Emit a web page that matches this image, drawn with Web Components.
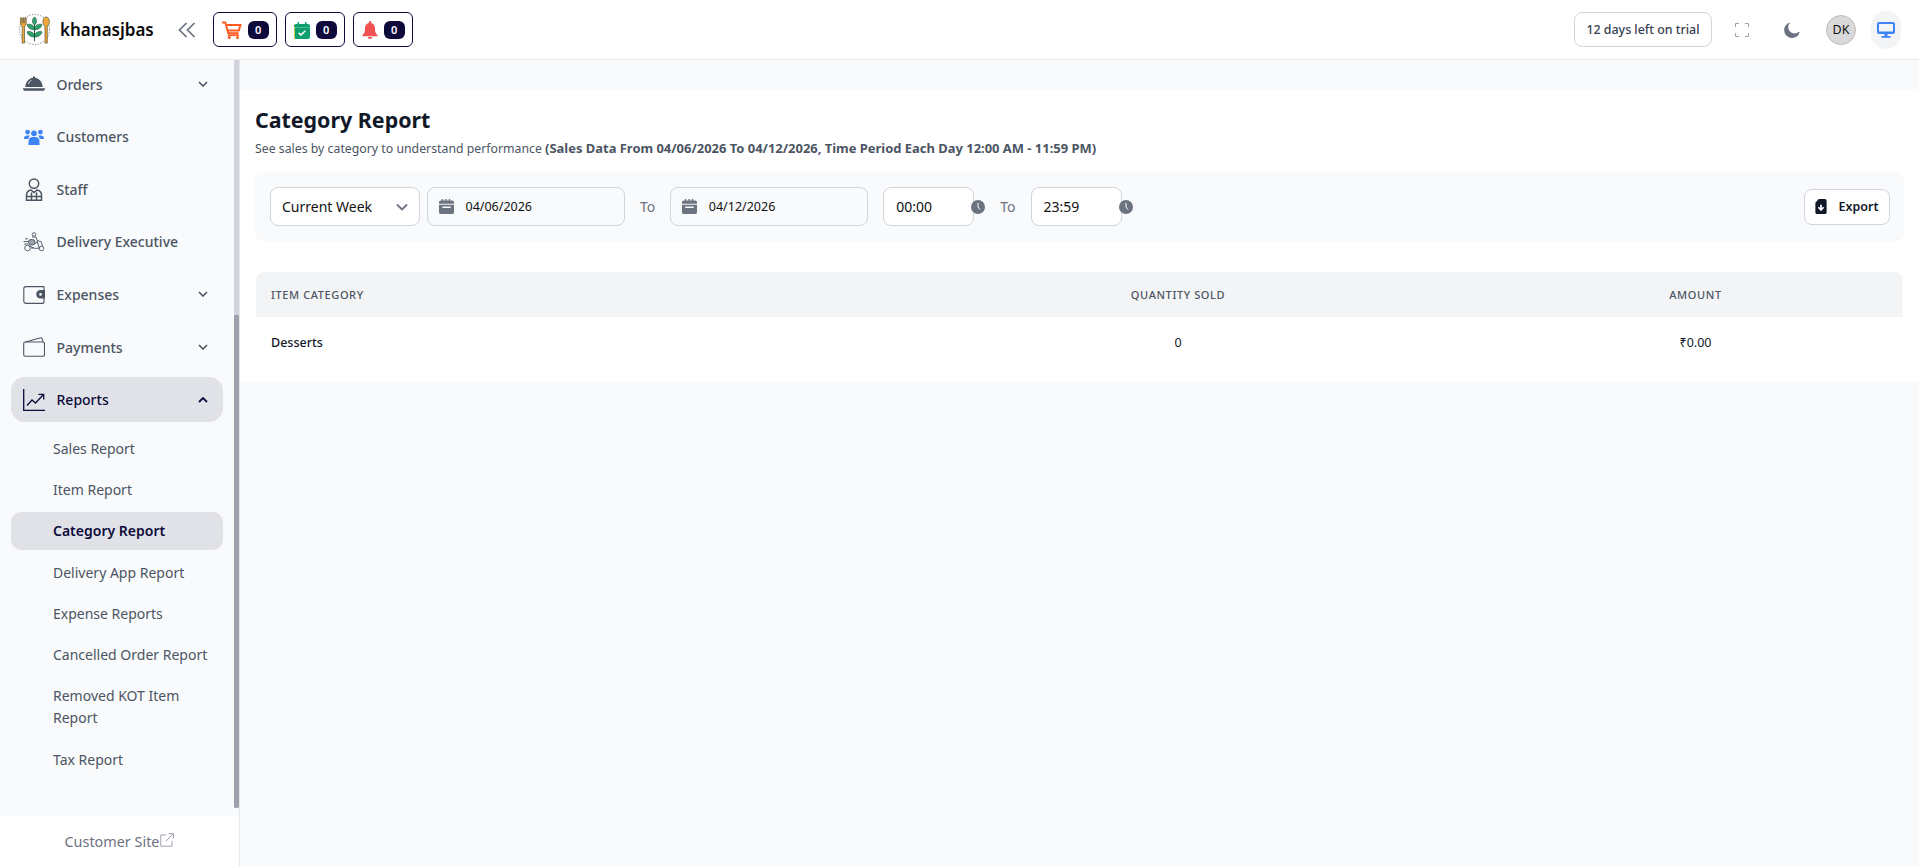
<!doctype html>
<html><head><meta charset="utf-8">
<style>
html,body{margin:0;height:100%;overflow:hidden}
body{font-family:"Noto Sans",sans-serif;background:#f9fafb;color:#111827}
app-shell{height:100vh}
</style></head>
<body>
<app-shell>
  <top-bar slot="top"></top-bar>
  <side-bar slot="side"></side-bar>
  <report-page></report-page>
</app-shell>
<script>
const I={
 logo:`<svg viewBox="0 0 34 34" width="33" height="33"><circle cx="17" cy="17" r="15.5" fill="none" stroke="#555" stroke-width=".7" stroke-dasharray="1.4 1.4"/><path d="M2.500 5v6c0 1.500 1 2.200 1.800 2.600V31h2.400V13.600c.8-.4 1.800-1.100 1.800-2.600V5H7v5H6V5H5v5H4V5z" fill="#f2a93b" stroke="#3a3a20" stroke-width=".6"/><path d="M29 4c-2 0-3.300 2.400-3.300 5.200 0 2.200.9 3.700 2.100 4.300V31h2.400V13.500c1.200-.6 2.100-2.100 2.100-4.300C32.300 6.400 31 4 29 4z" fill="#f2a93b" stroke="#3a3a20" stroke-width=".6"/><path d="M17 4c2.600 2.200 3 5.600 0 8.500-3-2.900-2.600-6.300 0-8.500zM17 15c1.700-3.200 5-3.900 7.600-3.200-.3 3.400-3.800 5.500-7.600 5.500-3.800 0-7.300-2.100-7.600-5.500 2.600-.7 5.900 0 7.600 3.200zM17 22.500c1.700-3.200 5-3.900 7.600-3.200-.3 3.400-3.800 5.500-7.600 5.500-3.800 0-7.300-2.100-7.600-5.500 2.600-.7 5.900 0 7.600 3.200z" fill="#2fa36b" stroke="#1e4d38" stroke-width=".6"/><path d="M17 12v17" stroke="#1e4d38" stroke-width="1"/></svg>`,
 dbl:`<svg viewBox="0 0 18 16" width="18" height="16" fill="none" stroke="#6b7280" stroke-width="1.700"><path d="M8.500 1 1.500 8l7 7M16.500 1 9.500 8l7 7"/></svg>`,
 cart:`<svg viewBox="0 0 20 18" width="20" height="18" fill="none" stroke="#ff5a1f"><path stroke-width="1.900" d="M0 1.500h3.400l2.800 10.700h10.400"/><path stroke-width="1.900" d="M4.300 4h14.200l-1.700 5.500H5.700"/><path stroke-width="1.700" d="M5.800 14.200h11"/><circle cx="7.300" cy="16.400" r="1.500" fill="#ff5a1f" stroke="none"/><circle cx="15.500" cy="16.400" r="1.500" fill="#ff5a1f" stroke="none"/></svg>`,
 cal:`<svg viewBox="0 0 16 18" width="16" height="18"><path d="M0 5a2 2 0 0 1 2-2h12a2 2 0 0 1 2 2v1.500H0z" fill="#0e9f6e"/><path d="M0 6.500h16V16a2 2 0 0 1-2 2H2a2 2 0 0 1-2-2z" fill="#0e9f6e"/><path d="M3.500 1h1.500v3.500H3.500zM11 1h1.500v3.500H11z" fill="#0e9f6e"/><path d="M4.700 11.800 7 14l4.300-4.200" stroke="#fff" stroke-width="1.600" fill="none"/><path d="M0 6h.8v12H0z" fill="#fcd34d"/></svg>`,
 bell:`<svg viewBox="0 0 16 18" width="16" height="18" fill="#f05252"><path d="M8 0c.7 0 1.100.5 1.100 1.100v.9C11.700 2.500 13 4.700 13 7.200c0 3.600.5 4.700 2.600 7.100.3.400 0 .9-.5.9H.9c-.5 0-.8-.5-.5-.9C2.500 11.900 3 10.800 3 7.200 3 4.700 4.300 2.500 6.900 2v-.9C6.900.500 7.300 0 8 0zM5.700 16h4.600C10 17.200 9.100 18 8 18s-2-.8-2.300-2z"/></svg>`,
 full:`<svg viewBox="0 0 14 14" width="14" height="14" fill="none" stroke="#9ca3af" stroke-width="1"><path d="M.5 4V.5H4M10 .5h3.500V4M13.500 10v3.500H10M4 13.500H.5V10"/></svg>`,
 moon:`<svg viewBox="0 0 16 16" width="16" height="16" fill="#6b7280"><path d="M6.300.4A7.900 7.900 0 0 0 8 16a7.900 7.900 0 0 0 7.600-5.700c.1-.4-.2-.7-.5-.5A6.300 6.300 0 0 1 6.300.4z"/></svg>`,
 mon:`<svg viewBox="0 0 18 16" width="18" height="16" fill="#3f83f8"><path fill-rule="evenodd" d="M2 0h14a2 2 0 0 1 2 2v8a2 2 0 0 1-2 2H2a2 2 0 0 1-2-2V2a2 2 0 0 1 2-2zm0 2v7.500h14V2z"/><path d="M7.500 12h3v2h-3zM4.500 14h9v1.800h-9z"/></svg>`,
 orders:`<svg viewBox="0 0 22 18" width="22" height="18" fill="#4b5563"><path d="M11 1.200a1.100 1.100 0 0 1 1 1.500c4.400.6 7.300 4.300 7.700 9.300H2.300C2.700 7 5.600 3.300 10 2.700a1.100 1.100 0 0 1 1-1.500z"/><path d="M0 13.200h22v.9l-1 1.700H1L0 14.100z"/><path d="M5.500 9c.4-1.700 1.400-3 3-3.700" stroke="#f9fafb" stroke-width=".9" fill="none"/></svg>`,
 cust:`<svg viewBox="0 0 20 16" width="20" height="16" fill="#3f83f8"><circle cx="3.600" cy="3.100" r="2.400"/><circle cx="16.400" cy="3.100" r="2.400"/><circle cx="10" cy="4.300" r="2.900"/><path d="M0 9.200c0-1.600 1.300-2.800 3-2.800h1.700c.5 0 1 .2 1.300.4-1 .9-1.600 2-1.600 3.300H0zM20 9.200c0-1.600-1.300-2.800-3-2.800h-1.700c-.5 0-1 .2-1.300.4 1 .9 1.600 2 1.600 3.300H20zM4.500 12.300c0-2.400 1.800-4.300 4-4.300h3c2.200 0 4 1.900 4 4.300V16h-11z"/></svg>`,
 staff:`<svg viewBox="0 0 18 23" width="18" height="23" fill="none" stroke="#4b5563" stroke-width="1.500"><circle cx="9" cy="5.600" r="4.700"/><path d="M1.500 22.200v-5.200c0-2.800 2.300-4.500 4.500-5l3 2.500 3-2.500c2.200.5 4.500 2.200 4.500 5v5.200zM6.500 14.500v7.700M11.500 14.500v7.700M1.500 18.500h15"/></svg>`,
 deliv:`<svg viewBox="0 0 22 20" width="22" height="20" fill="none" stroke="#4b5563" stroke-width=".9"><circle cx="11" cy="2.500" r="1.800"/><path d="M9 5h4l1.500 4.500-2 2H9.500"/><circle cx="4.500" cy="16" r="2.800"/><circle cx="18.500" cy="16.500" r="2.300"/><rect x="5.500" y="7.500" width="6.500" height="5.500" rx="2.500" fill="#9ca3af"/><path d="M.5 9.500H5M1 12h4M2 6.800h3M5 13.500c2.800 1 5.600 2.800 6.800 2.800h4.400l-2-7 2-1M16.200 9.500h2l1.200 4.500M8 16h3"/></svg>`,
 wallet:`<svg viewBox="0 0 22 19" width="22" height="19" fill="none" stroke="#4b5563" stroke-width="1.100"><path d="M21 1.600H3A2.200 2.200 0 0 0 .8 3.800v12.400A2.200 2.200 0 0 0 3 18.400h16a2 2 0 0 0 2-2V13"/><path d="M21 6V1.600"/><path d="M21 5.600h-3.500a3.500 3.500 0 0 0 0 7.400H21.500V5.600z" fill="#4b5563"/><circle cx="17.500" cy="9.400" r="1.300" fill="#f9fafb" stroke="none"/></svg>`,
 pay:`<svg viewBox="0 0 22 20" width="22" height="20" fill="none" stroke="#4b5563" stroke-width="1.100"><rect x=".7" y="5" width="20.800" height="14.300" rx="1.600"/><path d="M2.500 5 17.700.8c.6-.2 1.300.2 1.400.8L20 5"/></svg>`,
 chart:`<svg viewBox="0 0 22 22" width="22" height="22" fill="none" stroke="#0e0b3c" stroke-width="1.300"><path d="M.7 0v21.300H22"/><path d="M4 16.500 9 11l3.500 3L20 6"/><path d="M15.500 5.300H20.700V10.500"/></svg>`,
 up:`<svg viewBox="0 0 10 6" width="10" height="6" fill="none" stroke="#0e0b3c" stroke-width="1.800"><path d="M1 5l4-4 4 4"/></svg>`,
 down:`<svg viewBox="0 0 10 6" width="10" height="6" fill="none" stroke="#4b5563" stroke-width="1.600"><path d="M1 1l4 4 4-4"/></svg>`,
 ext:`<svg viewBox="0 0 14 14" width="14" height="14" fill="none" stroke="#9ca3af" stroke-width="1"><path d="M6 2H.8v11.200H12V8M8.500.6h4.900v4.900M13.300.7 6 8"/></svg>`,
 date:`<svg viewBox="0 0 16 16" width="15" height="15" fill="#6b7280"><path d="M3 0h1.500v1.500h2.200V0h1.500v1.500h2.200V0h1.500v1.500H14A2 2 0 0 1 16 3.500V5H0V3.500a2 2 0 0 1 2-2h1zM0 6.200h16V14a2 2 0 0 1-2 2H2a2 2 0 0 1-2-2zM3.500 8v1.500h9V8z"/></svg>`,
 clock:`<svg viewBox="0 0 14 14" width="14" height="14"><circle cx="7" cy="7" r="7" fill="#6b7280"/><path d="M7 3v4l2 2.500" stroke="#fff" stroke-width="1" fill="none"/></svg>`,
 exp:`<svg viewBox="0 0 12 16" width="12" height="15"><path d="M3.500 0H10a2 2 0 0 1 2 2v12a2 2 0 0 1-2 2H2a2 2 0 0 1-2-2V4z" fill="#111827"/><path d="M6 6v5.500M3.200 8.800 6 11.700 8.800 8.800" stroke="#fff" stroke-width="1.800" fill="none"/></svg>`,
 sel:`<svg viewBox="0 0 12 8" width="12" height="8" fill="none" stroke="#6b7280" stroke-width="1.800"><path d="M1 1.500l5 5 5-5"/></svg>`
};
function def(tag,css,html,init){
  customElements.define(tag,class extends HTMLElement{
    connectedCallback(){
      if(this.shadowRoot)return;
      const r=this.attachShadow({mode:'open'});
      r.innerHTML=`<style>${css}</style>`+(typeof html==='function'?html(this):html);
    }
  });
}
def('app-shell',`:host{display:grid;grid-template-columns:240px 1fr;grid-template-rows:60px 806px;height:866px}
 .t{grid-column:1/3}`,`<div class="t"><slot name="top"></slot></div><slot name="side"></slot><slot></slot>`);

def('count-chip',`:host{display:flex;align-items:center;height:35px;box-sizing:border-box;border:1px solid #0e0b3c;border-radius:6px;background:#fff;padding:0 7px 0 8px;gap:6px}
 .i{display:flex}
 b{display:flex;align-items:center;justify-content:center;width:21px;height:18px;border-radius:6px;background:#0e0b3c;color:#fff;font:600 11px "Noto Sans",sans-serif}`,
 h=>`<span class="i">${I[h.getAttribute('icon')]}</span><b>0</b>`);

def('top-bar',`:host{display:flex;align-items:center;height:60px;box-sizing:border-box;background:#fff;border-bottom:1px solid #e5e7eb;padding:0 18px 0 18px;font-family:"Noto Sans",sans-serif}
 .logo{display:flex;margin-top:-1px}
 .name{font-size:17px;font-weight:600;color:#0b0b0b;margin-left:9px;width:93px;white-space:nowrap}
 .dbl{display:flex;margin-left:25px;margin-right:16.600px}
 .chips{display:flex;gap:7.300px}
 .sp{flex:1}
 .trial{box-sizing:border-box;height:35px;width:138px;display:flex;align-items:center;justify-content:center;border:1px solid #d1d5db;border-radius:8px;font-size:12.400px;font-weight:500;color:#374151;background:#fff}
 .f{display:flex;margin-left:23px}
 .m{display:flex;margin-left:35px}
 .av{width:30px;height:30px;box-sizing:border-box;border:1px solid #bdbdbd;border-radius:50%;background:#d9d9d9;display:flex;align-items:center;justify-content:center;font-size:12.500px;color:#111;margin-left:26px}
 .mon{width:30px;height:38px;border-radius:15px;background:#f3f4f6;display:flex;align-items:center;justify-content:center;margin-left:15px}`,
 `<span class="logo">${I.logo}</span><span class="name">khanasjbas</span><span class="dbl">${I.dbl}</span>
 <div class="chips"><count-chip icon="cart" style="width:64.700px"></count-chip><count-chip icon="cal" style="width:60.700px"></count-chip><count-chip icon="bell" style="width:60.700px"></count-chip></div>
 <span class="sp"></span><div class="trial">12 days left on trial</div><span class="f">${I.full}</span><span class="m">${I.moon}</span><div class="av">DK</div><div class="mon">${I.mon}</div>`);

def('nav-item',`:host{display:flex;align-items:center;height:45px;box-sizing:border-box;margin:0 11px;padding:0 12px 0 12px;border-radius:14px;font-size:14px;font-weight:500;color:#4b5563}
 :host([active]){background:#e1e2e7;color:#0e0b3c}
 .i{width:22px;height:23px;display:flex;align-items:center;justify-content:center;margin-right:11.500px;flex:none}
 .t{flex:1;white-space:nowrap}
 .c{display:flex;margin-right:3px}`,
 h=>`<span class="i">${I[h.getAttribute('icon')]}</span><span class="t"><slot></slot></span>${h.hasAttribute('open')?`<span class="c">${I.up}</span>`:h.hasAttribute('caret')?`<span class="c">${I.down}</span>`:''}`);

def('sub-item',`:host{display:block;margin:0 11px;padding:8px 8px 8px 42px;border-radius:10px;font-size:14px;line-height:22px;color:#4b5563}
 :host([active]){background:#e1e2e7;color:#0e0b3c;font-weight:600}`,`<slot></slot>`);

def('side-bar',`:host{display:flex;flex-direction:column;height:806px;border-right:1px solid #e5e7eb;box-sizing:border-box;background:#f9fafb;overflow:hidden}
 .w{flex:1;display:flex;min-height:0}
 nav{flex:1;display:flex;flex-direction:column;padding-top:1.600px;min-width:0}
 .main{display:flex;flex-direction:column;gap:7.600px}
 .sub{display:flex;flex-direction:column;gap:3.300px;margin-top:7.500px}
 .track{width:5px;background:#d1d5db;display:flex;flex-direction:column;height:748px}
 .thumb{margin-top:255px;flex:1;background:#9ca3af;border-radius:0 0 3px 3px}
 footer{height:50px;flex:none;background:#fff;display:flex;align-items:center;justify-content:center;gap:1px;font-size:14.400px;color:#6b7280;padding-top:1px;box-sizing:border-box}
 footer svg{margin-top:-4px}`,
 `<div class="w"><nav><div class="main">
  <nav-item icon="orders" caret>Orders</nav-item>
  <nav-item icon="cust">Customers</nav-item>
  <nav-item icon="staff">Staff</nav-item>
  <nav-item icon="deliv">Delivery Executive</nav-item>
  <nav-item icon="wallet" caret>Expenses</nav-item>
  <nav-item icon="pay" caret>Payments</nav-item>
  <nav-item icon="chart" open active>Reports</nav-item></div>
  <div class="sub"><sub-item>Sales Report</sub-item><sub-item>Item Report</sub-item><sub-item active>Category Report</sub-item><sub-item>Delivery App Report</sub-item><sub-item>Expense Reports</sub-item><sub-item>Cancelled Order Report</sub-item><sub-item>Removed KOT Item Report</sub-item><sub-item>Tax Report</sub-item></div>
 </nav><div class="track"><div class="thumb"></div></div></div>
 <footer><span>Customer Site</span>${I.ext}</footer>`);

def('filter-bar',`:host{display:flex;align-items:center;height:69px;box-sizing:border-box;background:#f9fafb;border-radius:8px;padding:0 14px 0 15px;font-family:"Noto Sans",sans-serif}
 .box{box-sizing:border-box;height:39px;border:1px solid #d1d5db;border-radius:8px;display:flex;align-items:center;font-size:14px;color:#111}
 .sel{width:150px;background:#fff;padding:0 11px;justify-content:space-between}
 .date{background:#f9fafb;font-size:12.500px;padding:0 11px;gap:11.500px}
 .to{color:#6b7280;font-size:14px}
 .time{background:#fff;width:91px;padding:0 12px}
 .clk{display:flex;margin-left:-3px}
 .sp{flex:1}
 .exp{box-sizing:border-box;width:86px;height:36px;border:1px solid #d1d5db;border-radius:8px;background:#fff;display:flex;align-items:center;justify-content:center;gap:11px;font-size:12.500px;font-weight:600;color:#111827}`,
 `<div class="box sel"><span>Current Week</span>${I.sel}</div>
 <div class="box date" style="width:198px;margin-left:7px">${I.date}<span>04/06/2026</span></div>
 <span class="to" style="margin:0 15px">To</span>
 <div class="box date" style="width:198px">${I.date}<span>04/12/2026</span></div>
 <div class="box time" style="margin-left:15px">00:00</div><span class="clk">${I.clock}</span>
 <span class="to" style="margin:0 15px 0 15px">To</span>
 <div class="box time">23:59</div><span class="clk">${I.clock}</span>
 <span class="sp"></span><div class="exp">${I.exp}<span>Export</span></div>`);

def('report-table',`:host{display:block;margin:31px 1px 0;font-family:"Noto Sans",sans-serif}
 .r{display:grid;grid-template-columns:614px 616px 1fr;align-items:center}
 .h{height:45px;background:#f3f4f6;border-radius:8px 8px 0 0;font-size:11px;font-weight:500;letter-spacing:.6px;color:#4b5563}
 .d{height:65px;font-size:12.500px;color:#111827;padding-bottom:15px;box-sizing:border-box}
 .r>:first-child{padding-left:15px}
 .r>:nth-child(2),.r>:nth-child(3){text-align:center}
 .r>:nth-child(3){padding-left:2px}
 .d>:first-child{font-weight:500}`,
 `<div class="r h"><span>ITEM CATEGORY</span><span>QUANTITY SOLD</span><span>AMOUNT</span></div>
  <div class="r d"><span>Desserts</span><span>0</span><span>₹0.00</span></div>`);

def('report-page',`:host{display:block;padding-top:29px;font-family:"Noto Sans",sans-serif;background:#f9fafb}
 .panel{background:#fff;height:293px;box-sizing:border-box;padding:15.500px 15px 0}
 h1{margin:0;font-size:21.400px;line-height:30px;font-weight:700;color:#111827}
 p{margin:4px 0 14.500px;font-size:12.300px;line-height:18px;color:#4b5563}
 p b{font-weight:700;font-size:12.950px}`,
 `<div class="panel"><h1>Category Report</h1><p>See sales by category to understand performance <b>(Sales Data From 04/06/2026 To 04/12/2026, Time Period Each Day 12:00 AM - 11:59 PM)</b></p><filter-bar></filter-bar><report-table></report-table></div>`);
</script>
</body></html>
